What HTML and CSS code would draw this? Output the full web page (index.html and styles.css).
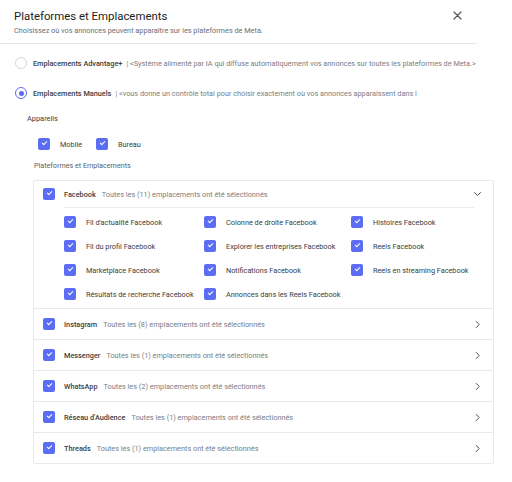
FILE: index.html
```html
<!DOCTYPE html>
<html lang="fr">
<head>
<meta charset="utf-8">
<title>Plateformes et Emplacements</title>
<link rel="stylesheet" href="styles.css">
</head>
<body>
<div class="modal">
  <header class="head">
    <div class="head-text">
      <h1 class="title">Plateformes et Emplacements</h1>
      <p class="subtitle">Choisissez où vos annonces peuvent apparaître sur les plateformes de Meta.</p>
    </div>
    <button class="close" aria-label="Fermer">
      <svg width="9" height="9" viewBox="0 0 9 9"><path d="M1 1L8 8M8 1L1 8" stroke="#50555c" stroke-width="1.2" fill="none" stroke-linecap="round"/></svg>
    </button>
  </header>

  <div class="content">
    <div class="radio-row">
      <span class="radio"></span>
      <span class="radio-label">Emplacements Advantage+</span>
      <span class="radio-desc">| &lt;Système alimenté par IA qui diffuse automatiquement vos annonces sur toutes les plateformes de Meta.&gt;</span>
    </div>
    <div class="radio-row">
      <span class="radio is-on"></span>
      <span class="radio-label">Emplacements Manuels</span>
      <span class="radio-desc">| &lt;vous donne un contrôle total pour choisir exactement où vos annonces apparaissent dans l</span>
    </div>

    <div class="label label-devices">Appareils</div>
    <div class="devices">
      <span class="check-item"><span class="cb"></span>Mobile</span>
      <span class="check-item"><span class="cb"></span>Bureau</span>
    </div>

    <div class="label label-platforms">Plateformes et Emplacements</div>

    <div class="card">
      <div class="platform is-open">
        <div class="platform-head">
          <span class="cb"></span>
          <span class="p-name">Facebook</span>
          <span class="p-info">Toutes les (11) emplacements ont été sélectionnés</span>
          <svg class="chev" width="9" height="6" viewBox="0 0 9 6"><path d="M1.2 1.3L4.5 4.5L7.8 1.3" stroke="#4a4e54" stroke-width="1" fill="none"/></svg>
        </div>
        <div class="placements">
          <span class="pl"><span class="cb"></span>Fil d'actualité Facebook</span>
          <span class="pl"><span class="cb"></span>Colonne de droite Facebook</span>
          <span class="pl"><span class="cb"></span>Histoires Facebook</span>
          <span class="pl"><span class="cb"></span>Fil du profil Facebook</span>
          <span class="pl"><span class="cb"></span>Explorer les entreprises Facebook</span>
          <span class="pl"><span class="cb"></span>Reels Facebook</span>
          <span class="pl"><span class="cb"></span>Marketplace Facebook</span>
          <span class="pl"><span class="cb"></span>Notifications Facebook</span>
          <span class="pl"><span class="cb"></span>Reels en streaming Facebook</span>
          <span class="pl"><span class="cb"></span>Résultats de recherche Facebook</span>
          <span class="pl"><span class="cb"></span>Annonces dans les Reels Facebook</span>
        </div>
      </div>

      <div class="platform">
        <div class="platform-head">
          <span class="cb"></span>
          <span class="p-name">Instagram</span>
          <span class="p-info">Toutes les (8) emplacements ont été sélectionnés</span>
          <svg class="chev" width="9" height="9" viewBox="0 0 9 9"><path d="M3 1.2L6.2 4.5L3 7.8" stroke="#4a4e54" stroke-width="1" fill="none"/></svg>
        </div>
      </div>
      <div class="platform">
        <div class="platform-head">
          <span class="cb"></span>
          <span class="p-name">Messenger</span>
          <span class="p-info">Toutes les (1) emplacements ont été sélectionnés</span>
          <svg class="chev" width="9" height="9" viewBox="0 0 9 9"><path d="M3 1.2L6.2 4.5L3 7.8" stroke="#4a4e54" stroke-width="1" fill="none"/></svg>
        </div>
      </div>
      <div class="platform">
        <div class="platform-head">
          <span class="cb"></span>
          <span class="p-name">WhatsApp</span>
          <span class="p-info">Toutes les (2) emplacements ont été sélectionnés</span>
          <svg class="chev" width="9" height="9" viewBox="0 0 9 9"><path d="M3 1.2L6.2 4.5L3 7.8" stroke="#4a4e54" stroke-width="1" fill="none"/></svg>
        </div>
      </div>
      <div class="platform">
        <div class="platform-head">
          <span class="cb"></span>
          <span class="p-name">Réseau d'Audience</span>
          <span class="p-info">Toutes les (1) emplacements ont été sélectionnés</span>
          <svg class="chev" width="9" height="9" viewBox="0 0 9 9"><path d="M3 1.2L6.2 4.5L3 7.8" stroke="#4a4e54" stroke-width="1" fill="none"/></svg>
        </div>
      </div>
      <div class="platform">
        <div class="platform-head">
          <span class="cb"></span>
          <span class="p-name">Threads</span>
          <span class="p-info">Toutes les (1) emplacements ont été sélectionnés</span>
          <svg class="chev" width="9" height="9" viewBox="0 0 9 9"><path d="M3 1.2L6.2 4.5L3 7.8" stroke="#4a4e54" stroke-width="1" fill="none"/></svg>
        </div>
      </div>
    </div>
  </div>
</div>
</body>
</html>
```

FILE: styles.css
```css
* { box-sizing: border-box; }

html, body {
  margin: 0;
  padding: 0;
  background: #fff;
}

body {
  font-family: Roboto, "Liberation Sans", sans-serif;
  color: #1c1e21;
  width: 512px;
}

/* ---- header ---- */
.head {
  width: 477px;
  display: flex;
  justify-content: space-between;
  align-items: flex-start;
  padding: 8px 15px 7px 14px;
  border-bottom: 1px solid #e6e7ea;
}

.title {
  margin: 0;
  font-size: 11.4px;
  line-height: 16px;
  font-weight: 400;
  color: #1c1e21;
}

.subtitle {
  margin: 1px 0 0;
  font-size: 7.3px;
  line-height: 11px;
  color: #6b6f75;
}

.close {
  border: 0;
  background: none;
  padding: 0;
  margin-top: 3px;
  width: 9px;
  height: 9px;
  display: flex;
}

/* ---- body ---- */
.content {
  padding-top: 4px;
}

.radio-row {
  height: 30px;
  display: flex;
  align-items: center;
  padding-left: 15px;
  font-size: 7.3px;
  white-space: nowrap;
}

.radio {
  width: 12px;
  height: 12px;
  border-radius: 50%;
  border: 1px solid #d3d6db;
  margin-right: 6px;
  flex: none;
  display: flex;
  align-items: center;
  justify-content: center;
}

.radio.is-on {
  border: 1.4px solid #5b6df2;
}

.radio.is-on::after {
  content: "";
  width: 5px;
  height: 5px;
  border-radius: 50%;
  background: #5b6df2;
}

.radio-label {
  font-weight: 500;
  color: #3a3d42;
  margin-right: 4px;
}

.radio-desc {
  color: #7a7e84;
}

.label {
  font-size: 7.4px;
  line-height: 12px;
  color: #3a3d42;
}

.label-devices {
  margin-top: 5px;
  padding-left: 27px;
}

.label-platforms {
  margin-top: 10px;
  padding-left: 34px;
  font-size: 7.2px;
  color: #5d6167;
}

.devices {
  display: flex;
  gap: 10px;
  margin-top: 13px;
  padding-left: 38px;
}

.check-item {
  display: flex;
  align-items: center;
  height: 12px;
  font-size: 7.3px;
  color: #3a3d42;
  gap: 10px;
  width: 48px;
}

/* checkbox */
.cb {
  position: relative;
  width: 12px;
  height: 12px;
  border-radius: 2px;
  background: #5b6df2;
  flex: none;
}

.cb::after {
  content: "";
  position: absolute;
  left: 4px;
  top: 3px;
  width: 4px;
  height: 2px;
  border-left: 1px solid #fff;
  border-bottom: 1px solid #fff;
  transform: rotate(-45deg);
}

/* ---- platforms card ---- */
.card {
  margin: 8px 0 0 33px;
  width: 461px;
  border: 1px solid #e8e9ec;
  border-radius: 2px;
}

.platform + .platform {
  border-top: 1px solid #e8e9ec;
}

.platform-head {
  height: 30px;
  display: flex;
  align-items: center;
  padding-left: 9px;
  padding-right: 11px;
  font-size: 7.3px;
  white-space: nowrap;
}

.is-open .platform-head {
  height: 26px;
}

.platform-head .cb {
  margin-right: 9px;
}

.p-name {
  font-weight: 500;
  color: #3a3d42;
  margin-right: 6px;
}

.p-info {
  color: #7a7e84;
  flex: 1;
}

.chev {
  flex: none;
}

.placements {
  margin: 0 19px 0 30px;
  border-top: 1px solid #ebecef;
  padding: 8px 0 8px;
  display: grid;
  grid-template-columns: 140px 147px 1fr;
  row-gap: 12px;
}

.pl {
  display: flex;
  align-items: center;
  height: 12px;
  gap: 10px;
  font-size: 7.3px;
  color: #3a3d42;
  white-space: nowrap;
}
```
